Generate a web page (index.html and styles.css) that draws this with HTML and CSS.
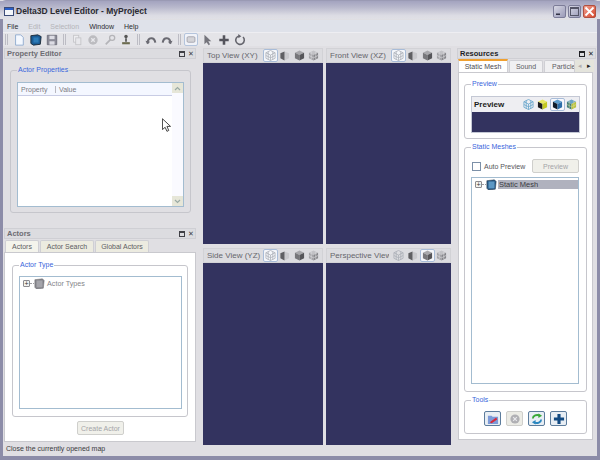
FILE: index.html
```html
<!DOCTYPE html>
<html lang="en">
<head>
<meta charset="utf-8">
<title>Delta3D Level Editor - MyProject</title>
<link rel="stylesheet" href="styles.css">
</head>
<body>
<svg class="defs" width="0" height="0">
  <defs>
    <symbol id="cube-wire" viewBox="0 0 12 12">
      <path d="M6 .5 11 3v6l-5 2.500L1 9V3z M1 3l5 2.500L11 3 M6 5.500v6 M3.500 1.800v8.800 M8.500 1.800v8.800 M1 6l5 2.500L11 6" fill="none" stroke="#a9adb5" stroke-width=".8"/>
    </symbol>
    <symbol id="cube-wire-blue" viewBox="0 0 12 12">
      <path d="M6 .5 11 3v6l-5 2.500L1 9V3z M1 3l5 2.500L11 3 M6 5.500v6 M3.500 1.800v8.800 M8.500 1.800v8.800 M1 6l5 2.500L11 6" fill="none" stroke="#5c9fc8" stroke-width=".8"/>
    </symbol>
    <symbol id="cube-half" viewBox="0 0 12 12">
      <path d="M6 1.500 11 3.500v5.500L6 11.500z" fill="#c9c9cd"/>
      <path d="M6 1.500 1.500 3.500v5.500L6 11.500z" fill="#5f5f63"/>
    </symbol>
    <symbol id="cube-solid" viewBox="0 0 12 12">
      <path d="M6 .5 11 3 6 5.500 1 3z" fill="#a8a8ac"/>
      <path d="M1 3l5 2.500v6L1 9z" fill="#77777b"/>
      <path d="M11 3 6 5.500v6L11 9z" fill="#56565a"/>
    </symbol>
    <symbol id="cube-tex" viewBox="0 0 12 12">
      <path d="M6 .5 11 3 6 5.500 1 3z" fill="#c2c2c6"/>
      <path d="M1 3l5 2.500v6L1 9z" fill="#a3a3a7"/>
      <path d="M11 3 6 5.500v6L11 9z" fill="#85858a"/>
      <path d="M3.500 2v8 M8.500 2v8 M1 6l5 2.500L11 6" fill="none" stroke="#dcdcdf" stroke-width=".7"/>
    </symbol>
    <symbol id="cube-yellow" viewBox="0 0 12 12">
      <path d="M6 .5 11 3 6 5.500 1 3z" fill="#e8e860"/>
      <path d="M1 3l5 2.500v6L1 9z" fill="#1c1c20"/>
      <path d="M11 3 6 5.500v6L11 9z" fill="#c4c820"/>
    </symbol>
    <symbol id="cube-blue" viewBox="0 0 12 12">
      <path d="M6 .5 11 3 6 5.500 1 3z" fill="#5d9ccc"/>
      <path d="M1 3l5 2.500v6L1 9z" fill="#101c2c"/>
      <path d="M11 3 6 5.500v6L11 9z" fill="#2c6da8"/>
    </symbol>
    <symbol id="cube-mix" viewBox="0 0 12 12">
      <path d="M6 .5 11 3 6 5.500 1 3z" fill="#6aa4c8"/>
      <path d="M1 3l5 2.500v6L1 9z" fill="#3f7a78"/>
      <path d="M11 3 6 5.500v6L11 9z" fill="#b8c03c"/>
      <path d="M3.500 2v8 M8.500 2v8 M1 6l5 2.500L11 6" fill="none" stroke="#d8e0a0" stroke-width=".6"/>
    </symbol>
  </defs>
</svg>

<div class="window">
  <header class="titlebar">
    <svg class="app-icon" width="10" height="9" viewBox="0 0 10 9"><rect x=".5" y=".5" width="9" height="8" fill="#f4f6fa" stroke="#3c4c78"/><rect x="1" y="1" width="8" height="2" fill="#2a5fc8"/></svg>
    <span class="title-text">Delta3D Level Editor - MyProject</span>
    <div class="win-buttons">
      <span class="win-btn"><svg width="11" height="11" viewBox="0 0 11 11"><rect x="2" y="7.500" width="4" height="1.500" fill="#334"/></svg></span>
      <span class="win-btn"><svg width="11" height="11" viewBox="0 0 11 11"><rect x="1.500" y="1.500" width="8" height="8" fill="none" stroke="#556" stroke-width="1"/><rect x="1.500" y="1.500" width="8" height="1.500" fill="#556"/></svg></span>
      <span class="win-btn win-close"><svg width="11" height="11" viewBox="0 0 11 11"><path d="M1.500 1.500l8 8M9.500 1.500l-8 8" stroke="#fff" stroke-width="1.800"/></svg></span>
    </div>
  </header>

  <nav class="menubar">
    <span class="menu">File</span>
    <span class="menu off">Edit</span>
    <span class="menu off">Selection</span>
    <span class="menu">Window</span>
    <span class="menu">Help</span>
  </nav>

  <div class="toolbar">
    <span class="grip grip-first"></span>
    <svg class="tool" viewBox="0 0 14 14"><path d="M3 1h6l3 3v9H3z" fill="#f4f8ff" stroke="#8aa6cc"/></svg>
    <svg class="tool" viewBox="0 0 14 14"><path d="M1 2l8-1 4 2-1 9-8 1-3-2z" fill="#1c5c94" stroke="#16222e"/><path d="M4 4h6v6H4z" fill="#2c7cb8"/></svg>
    <svg class="tool" viewBox="0 0 14 14"><path d="M1.500 1.500h11v11h-11z" fill="#8c8c98" stroke="#6c6c78"/><rect x="4" y="2" width="6" height="4" fill="#dcdce4"/><rect x="4" y="8.500" width="6" height="4" fill="#dcdce4"/></svg>
    <span class="grip"></span>
    <svg class="tool" viewBox="0 0 14 14"><rect x="3" y="1.500" width="6" height="8" fill="#ededf0" stroke="#c4c4c8"/><rect x="5.500" y="4.500" width="6" height="8" fill="#e8e8ec" stroke="#c4c4c8"/></svg>
    <svg class="tool" viewBox="0 0 14 14"><circle cx="7" cy="7" r="5.500" fill="#bcbcc0"/><path d="M5 5l4 4M9 5l-4 4" stroke="#e8e8ec" stroke-width="1.500"/></svg>
    <svg class="tool" viewBox="0 0 14 14"><path d="M2 12 7.500 6.500" stroke="#b4b4b8" stroke-width="2"/><circle cx="9.500" cy="4.500" r="3" fill="none" stroke="#b4b4b8" stroke-width="1.500"/></svg>
    <svg class="tool" viewBox="0 0 14 14"><circle cx="7" cy="3" r="2" fill="#555"/><path d="M6 5h2v4H6z" fill="#555"/><path d="M2.500 9.500h9V12h-9z" fill="#6c6c50"/></svg>
    <span class="grip"></span>
    <svg class="tool" viewBox="0 0 14 14"><path d="M3 11C3 3 11 3 12 10" fill="none" stroke="#6a6a72" stroke-width="2.400"/><path d="M.5 8l2.500 4 3-3z" fill="#6a6a72"/></svg>
    <svg class="tool" viewBox="0 0 14 14"><path d="M11 11C11 3 3 3 2 10" fill="none" stroke="#6a6a72" stroke-width="2.400"/><path d="M13.500 8l-2.500 4-3-3z" fill="#6a6a72"/></svg>
    <span class="grip"></span>
    <span class="tool-on"><svg viewBox="0 0 14 14"><rect x="2" y="3.500" width="10" height="7" rx="1.500" fill="#d4d4d8" stroke="#9c9ca4"/></svg></span>
    <svg class="tool tool-gap" viewBox="0 0 14 14"><path d="M4 1v11l2.500-2.500L9 13l1.500-1-2-3.500H12z" fill="#74747c"/></svg>
    <svg class="tool" viewBox="0 0 14 14"><path d="M7 1.500v11M1.500 7h11" stroke="#54545c" stroke-width="3"/></svg>
    <svg class="tool" viewBox="0 0 14 14"><path d="M10.500 3.500A5 5 0 1 1 6 2.200" fill="none" stroke="#64646c" stroke-width="1.800"/><path d="M5 0v5l3.500-2.500z" fill="#64646c"/></svg>
  </div>

  <main class="workspace">
    <div class="col-left">
      <section class="dock dock-property">
        <div class="dock-head"><span class="dock-title">Property Editor</span><span class="dock-ctl"><i class="ctl-float"></i><i class="ctl-x">✕</i></span></div>
        <fieldset class="group group-props">
          <legend>Actor Properties</legend>
          <div class="table">
            <div class="table-main">
              <div class="table-head"><span class="th th-prop">Property</span><span class="th">Value</span></div>
            </div>
            <div class="scroll">
              <span class="scroll-btn"><svg width="7" height="5" viewBox="0 0 7 5"><path d="M1 4l2.500-2.500L6 4" fill="none" stroke="#9aaaa4" stroke-width="1.200"/></svg></span>
              <span class="scroll-btn"><svg width="7" height="5" viewBox="0 0 7 5"><path d="M1 1l2.500 2.500L6 1" fill="none" stroke="#9aaaa4" stroke-width="1.200"/></svg></span>
            </div>
          </div>
        </fieldset>
        <svg class="cursor" width="9" height="15" viewBox="0 0 10 16"><path d="M.5.500v12l3-2.500 2 4.500 2-1-2-4.500h4z" fill="#fff" stroke="#333"/></svg>
      </section>

      <section class="dock dock-actors">
        <div class="dock-head"><span class="dock-title">Actors</span><span class="dock-ctl"><i class="ctl-float"></i><i class="ctl-x">✕</i></span></div>
        <div class="tabs">
          <span class="tab tab-on tab-a">Actors</span>
          <span class="tab tab-b">Actor Search</span>
          <span class="tab tab-c">Global Actors</span>
        </div>
        <div class="pane pane-actors">
          <fieldset class="group group-type">
            <legend>Actor Type</legend>
            <div class="tree">
              <div class="tree-row">
                <span class="expander">+</span><span class="tree-dash"></span>
                <svg class="folder" viewBox="0 0 13 13"><path d="M1 2l9-1 2 2-1 9-8 1-2-2z" fill="#85858b" stroke="#66666c" stroke-width=".6"/><path d="M3 3h7v8H3z" fill="#a4a4aa"/></svg>
                <span class="tree-label">Actor Types</span>
              </div>
            </div>
          </fieldset>
          <button class="btn btn-create" type="button" disabled>Create Actor</button>
        </div>
      </section>
      <footer class="status">Close the currently opened map</footer>
    </div>

    <div class="views">
      <section class="view">
        <div class="view-head"><span class="view-title">Top View (XY)</span>
          <span class="vi vi-on"><svg><use href="#cube-wire"/></svg></span><span class="vi"><svg><use href="#cube-half"/></svg></span><span class="vi"><svg><use href="#cube-solid"/></svg></span><span class="vi"><svg><use href="#cube-tex"/></svg></span></div>
        <div class="viewport"></div>
      </section>
      <section class="view">
        <div class="view-head"><span class="view-title">Front View (XZ)</span>
          <span class="vi vi-on"><svg><use href="#cube-wire"/></svg></span><span class="vi"><svg><use href="#cube-half"/></svg></span><span class="vi"><svg><use href="#cube-solid"/></svg></span><span class="vi"><svg><use href="#cube-tex"/></svg></span></div>
        <div class="viewport"></div>
      </section>
      <section class="view">
        <div class="view-head"><span class="view-title">Side View (YZ)</span>
          <span class="vi vi-on"><svg><use href="#cube-wire"/></svg></span><span class="vi"><svg><use href="#cube-half"/></svg></span><span class="vi"><svg><use href="#cube-solid"/></svg></span><span class="vi"><svg><use href="#cube-tex"/></svg></span></div>
        <div class="viewport"></div>
      </section>
      <section class="view">
        <div class="view-head"><span class="view-title">Perspective View</span>
          <span class="vi"><svg><use href="#cube-wire"/></svg></span><span class="vi"><svg><use href="#cube-half"/></svg></span><span class="vi vi-on"><svg><use href="#cube-solid"/></svg></span><span class="vi"><svg><use href="#cube-tex"/></svg></span></div>
        <div class="viewport"></div>
      </section>
    </div>

    <section class="dock dock-res">
      <div class="dock-head"><span class="dock-title dock-title-strong">Resources</span><span class="dock-ctl dock-ctl-strong"><i class="ctl-float"></i><i class="ctl-x">✕</i></span></div>
      <div class="tabs tabs-res">
        <span class="tab tab-on tab-mesh">Static Mesh</span>
        <span class="tab tab-sound">Sound</span>
        <span class="tab tab-part">Particle</span>
        <span class="tab-nav"><i class="nav off">◂</i><i class="nav">▸</i></span>
      </div>
      <div class="pane pane-res">
        <fieldset class="group group-preview">
          <legend>Preview</legend>
          <div class="preview-box">
            <div class="preview-head"><b class="preview-title">Preview</b>
              <span class="pi"><svg><use href="#cube-wire-blue"/></svg></span><span class="pi"><svg><use href="#cube-yellow"/></svg></span><span class="pi pi-on"><svg><use href="#cube-blue"/></svg></span><span class="pi"><svg><use href="#cube-mix"/></svg></span>
            </div>
            <div class="preview-view"></div>
          </div>
        </fieldset>
        <fieldset class="group group-meshes">
          <legend>Static Meshes</legend>
          <div class="mesh-controls">
            <span class="check"></span><span class="check-label">Auto Preview</span>
            <button class="btn btn-preview" type="button" disabled>Preview</button>
          </div>
          <div class="tree tree-mesh">
            <div class="tree-row">
              <span class="expander">+</span><span class="tree-dash"></span>
              <svg class="folder" viewBox="0 0 13 13"><path d="M1 2l9-1 2 2-1 9-8 1-2-2z" fill="#2a5c88" stroke="#1c2c3c" stroke-width=".6"/><path d="M3 3h7v8H3z" fill="#5c98c4"/></svg>
              <span class="tree-label tree-sel">Static Mesh</span>
            </div>
          </div>
        </fieldset>
        <fieldset class="group group-tools">
          <legend>Tools</legend>
          <div class="tool-row">
            <span class="tb"><svg viewBox="0 0 13 13"><path d="M1 3h4l1 1h6v8H1z" fill="#7c9ad8"/><path d="M3 10l7-5 1 2-6 4z" fill="#d82838"/></svg></span>
            <span class="tb tb-off"><svg viewBox="0 0 13 13"><circle cx="6.500" cy="6.500" r="5" fill="#b0b0b4"/><path d="M4.500 4.500l4 4M8.500 4.500l-4 4" stroke="#e8e8ec" stroke-width="1.300"/></svg></span>
            <span class="tb"><svg viewBox="0 0 13 13"><path d="M2 6c0-3 4-5 8-3" fill="none" stroke="#38a838" stroke-width="2"/><path d="M8 .5 12 3 8 5.500z" fill="#38a838"/><path d="M11 7c0 3-4 5-8 3" fill="none" stroke="#2c88c0" stroke-width="2"/><path d="M5 7.500 1 10l4 2.500z" fill="#2c88c0"/></svg></span>
            <span class="tb"><svg viewBox="0 0 13 13"><path d="M6.500 1v11M1 6.500h11" stroke="#124a82" stroke-width="3.400"/></svg></span>
          </div>
        </fieldset>
      </div>
    </section>
  </main>
</div>
</body>
</html>
```

FILE: styles.css
```css
* { box-sizing: border-box; }
html, body { margin: 0; padding: 0; }
body {
  width: 600px;
  height: 460px;
  overflow: hidden;
  font-family: "Liberation Sans", Arial, sans-serif;
  font-size: 7px;
  color: #4a4a4e;
  background: #e0dfe3;
}
.defs { position: absolute; }
i { font-style: normal; }

.window {
  width: 600px;
  height: 460px;
  display: flex;
  flex-direction: column;
  background: #e0dfe3;
  border-style: solid;
  border-width: 1px 3px 4px 3px;
  border-color: #9a9ab4 #8c8ca8 #8c8ca8 #8c8ca8;
  border-radius: 6px 6px 0 0;
}

.titlebar {
  height: 18px;
  margin: 0 -3px;
  padding: 2px 4px 0 4px;
  display: flex;
  align-items: center;
  gap: 2px;
  background: linear-gradient(#a3a3bf, #b8b8cc 35%, #dcdce4 80%, #e0e0e6);
  flex: none;
}
.title-text { font-size: 8.500px; font-weight: 700; color: #2a2a30; }
.win-buttons { margin-left: auto; display: flex; gap: 2px; }
.win-btn {
  width: 13px; height: 13px;
  display: flex; align-items: center; justify-content: center;
  border: 1px solid #7c7c98;
  border-radius: 2px;
  background: linear-gradient(135deg, #d8d8e4, #9a9ab8);
}
.win-close { background: linear-gradient(135deg, #f0a090, #d8482c); border-color: #b05040; }

.menubar {
  height: 12px;
  display: flex;
  align-items: center;
  gap: 10px;
  padding: 0 4px;
  background: #dfe2ea;
  color: #2c2c30;
  flex: none;
  margin-top: 1px;
}
.menu { font-size: 7px; }
.off { color: #b4b4b8; }

.toolbar {
  height: 14px;
  display: flex;
  align-items: center;
  padding: 0 2px;
  background: #e4e4e8;
  border-top: 1px solid #eeeef2;
  flex: none;
}
.grip { width: 3px; height: 11px; margin: 0 3px 0 2px; border-left: 1px solid #bcbcc4; border-right: 1px solid #bcbcc4; flex: none; }
.grip-first { margin-left: 0; }
.tool { width: 12px; height: 12px; margin: 0 2.250px; display: block; flex: none; }
.tool-on { width: 14px; height: 13px; border: 1px solid #b4c4dc; border-radius: 2px; background: #f0f2f8; display: flex; flex: none; }
.tool-on svg { width: 12px; height: 11px; }
.tool-gap { margin-left: 3.500px; }

.workspace {
  flex: 1;
  min-height: 0;
  display: flex;
  padding: 2px 0 0 1px;
  background: #e0dfe3;
}

.col-left { width: 192px; display: flex; flex-direction: column; flex: none; }
.dock { display: flex; flex-direction: column; position: relative; }
.dock-property { height: 180px; }
.dock-actors { height: 214px; }
.dock-head {
  height: 11px;
  display: flex;
  align-items: center;
  justify-content: space-between;
  padding: 0 1px 0 2px;
  background: #dcdce0;
  border: 1px solid #cfcfd4;
  flex: none;
}
.dock-title { font-size: 7.500px; font-weight: 700; color: #6c6c72; }
.dock-title-strong { color: #222226; }
.dock-ctl { display: flex; align-items: center; gap: 3px; color: #404046; }
.dock-ctl-strong { color: #202024; }
.ctl-float { width: 6px; height: 6px; border: 1px solid currentColor; border-top-width: 2px; }
.ctl-x { font-size: 7px; line-height: 7px; }

.group {
  border: 1px solid #c6c6cc;
  border-radius: 3px;
  margin: 0;
  padding: 0;
  min-width: 0;
}
.group legend {
  color: #3a66dc;
  font-size: 7px;
  padding: 0 1px;
  line-height: 10px;
}
.group-tools legend { margin-left: 6px; }

.group-props { margin: 6px 5px 0 6px; height: 148px; padding: 7px 6px 0 6px; }
.table { height: 125px; display: flex; border: 1px solid #a3bcd0; background: #fff; }
.table-main { flex: 1; }
.table-head {
  height: 13px;
  display: flex;
  align-items: center;
  background: #f4f7ff;
  border-bottom: 1px solid #c8cce4;
}
.th { padding-left: 3px; font-size: 7px; color: #7c7c82; }
.th-prop { width: 38px; border-right: 1px solid #b8b8c0; }
.scroll {
  width: 11px;
  background: #fafaff;
  display: flex;
  flex-direction: column;
  justify-content: space-between;
}
.scroll-btn {
  height: 10px;
  background: #e6e6d8;
  display: flex;
  align-items: center;
  justify-content: center;
}

.cursor { position: absolute; left: 158px; top: 70px; }

.tabs { height: 13px; display: flex; align-items: flex-end; padding-left: 1px; flex: none; gap: 1px; padding-top: 1px; }
.tab {
  height: 12px;
  display: flex;
  align-items: center;
  justify-content: center;
  background: #ecebe0;
  border: 1px solid #cfcfd4;
  border-bottom: 0;
  border-radius: 2px 2px 0 0;
  font-size: 7px;
  color: #5c5c62;
  white-space: nowrap;
}
.tab-on { background: #f4f4ec; }
.tab-a { width: 34px; }
.tab-b { width: 54px; }
.tab-c { width: 54px; }

.pane { background: #fff; border: 1px solid #c9c9ce; display: flex; flex-direction: column; }
.pane-actors { height: 190px; padding: 7px 7px 0 7px; }
.group-type { height: 157px; padding: 6px 5px 0 6px; }
.tree { height: 133px; border: 1px solid #a3bcd0; background: #fff; padding: 0 0 0 3px; }
.tree-row { display: flex; align-items: center; height: 12px; }
.expander {
  width: 7px; height: 7px;
  border: 1px solid #8c8c90;
  border-radius: 1px;
  font-size: 7px;
  line-height: 5px;
  text-align: center;
  color: #333;
  flex: none;
  background: #f2f2ee;
}
.tree-dash { width: 4px; border-top: 1px dotted #9c9ca0; flex: none; }
.folder { width: 11px; height: 11px; flex: none; margin-right: 1px; }
.tree-label { font-size: 7.200px; color: #85858a; padding: 0 1px; }

.btn {
  font-family: inherit;
  font-size: 7px;
  color: #a4a4a8;
  background: #f0f0ea;
  border: 1px solid #cfcfcc;
  border-radius: 2px;
  height: 14px;
  padding: 0;
  white-space: nowrap;
}
.btn-create { width: 47px; align-self: center; margin-top: 4px; margin-left: 1px; }

.status { height: 14px; padding: 3px 0 0 2px; font-size: 7px; color: #3a3a3e; flex: none; }

.views {
  width: 248px;
  flex: none;
  margin-left: 7px;
  display: grid;
  grid-template-columns: 120px 125px;
  grid-template-rows: 196px 197px;
  column-gap: 3px;
  row-gap: 4px;
  align-content: start;
}
.view { display: flex; flex-direction: column; min-width: 0; }
.view-head {
  height: 15px;
  display: flex;
  align-items: center;
  padding: 0 1px 0 3px;
  background: #dcdce0;
  border: 1px solid #d2d2d6;
  overflow: hidden;
  flex: none;
}
.view-title {
  flex: 1;
  min-width: 0;
  margin-right: 2px;
  white-space: nowrap;
  overflow: hidden;
  font-size: 8px;
  color: #66666c;
}
.vi { width: 14.500px; height: 13px; display: flex; align-items: center; justify-content: center; flex: none; border: 1px solid transparent; }
.vi svg { width: 11px; height: 11px; }
.vi-on { border-color: #a8bcd8; border-radius: 2px; background: #f4f6fa; }
.viewport { flex: 1; background: #33335f; }

.dock-res { width: 139px; margin-left: 6px; flex: none; }
.tabs-res { padding-left: 1px; gap: 1px; }
.tab-mesh { width: 50px; height: 13px; border-top: 2px solid #f0a030; background: #fff; color: #4a4a4e; border-radius: 0; margin-top: -1px; }
.tab-sound { width: 34px; background: #f0f0f2; }
.tab-part { width: 31px; justify-content: flex-start; padding-left: 7px; overflow: hidden; background: #f0f0f2; }
.tab-nav { display: flex; height: 12px; align-self: flex-end; margin-left: -1px; }
.nav { width: 9.500px; height: 12px; font-size: 7px; line-height: 12px; text-align: center; background: #e4e4dc; color: #222; }
.nav.off { color: #b0b0b0; }

.pane-res { width: 135px; margin-left: 1px; height: 368px; padding: 6px 5px 0 5px; gap: 3px; }
.group-preview { height: 60px; padding: 7px 6px 0 6px; flex: none; }
.preview-box { height: 37px; border: 1px solid #c4c8d4; display: flex; flex-direction: column; background: #eeeef2; }
.preview-head { height: 15px; display: flex; align-items: center; padding-left: 2px; flex: none; }
.preview-title { flex: 1; font-size: 8px; color: #1c1c20; }
.pi { width: 14.500px; height: 13px; display: flex; align-items: center; justify-content: center; border: 1px solid transparent; flex: none; }
.pi svg { width: 11px; height: 11px; }
.pi-on { border-color: #a8bcd8; border-radius: 2px; background: #f8f8fc; }
.preview-view { flex: 1; background: #33335f; }

.group-meshes { height: 250px; padding: 7px 7px 0 6px; flex: none; }
.mesh-controls { display: flex; align-items: center; height: 14px; margin-bottom: 4px; padding-left: 1px; }
.check { width: 9px; height: 9px; border: 1px solid #7c90a8; background: #fff; flex: none; }
.check-label { margin-left: 3px; font-size: 7px; color: #55555a; white-space: nowrap; }
.btn-preview { width: 47px; margin-left: auto; }
.tree-mesh { height: 207px; padding: 0 0 0 3px; }
.tree-sel { background: #b0b2be; color: #3a3a40; flex: 1; padding-left: 1px; font-size: 7.500px; }

.group-tools { height: 39px; padding: 0; flex: none; }
.tool-row { display: flex; gap: 5px; justify-content: center; padding-top: 6px; }
.tb {
  width: 17px; height: 15px;
  display: flex; align-items: center; justify-content: center;
  border: 1px solid #5c7c9c;
  border-radius: 2px;
  background: #e8eef4;
}
.tb svg { width: 12px; height: 12px; }
.tb-off { border-color: #cfcfcc; background: #ecece6; }
```
